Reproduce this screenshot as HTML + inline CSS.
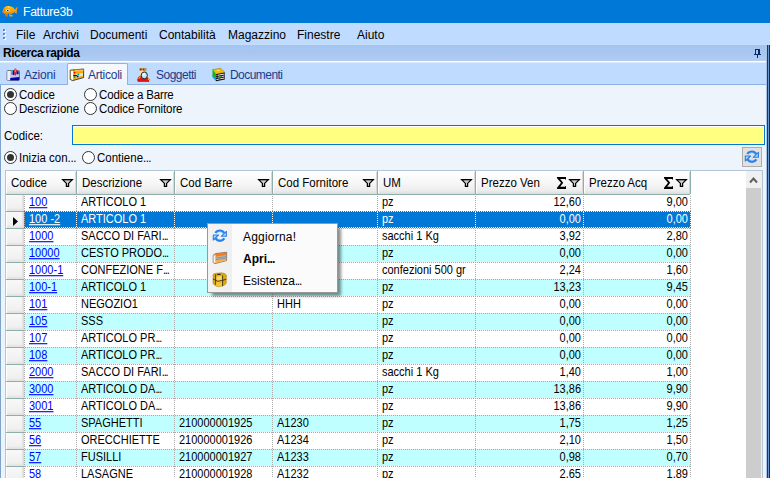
<!DOCTYPE html><html><head><meta charset="utf-8"><style>
*{margin:0;padding:0;box-sizing:border-box}
html,body{width:770px;height:478px;overflow:hidden;background:#EEF4FC;font-family:"Liberation Sans",sans-serif;position:relative}
.a{position:absolute}
.t{position:absolute;white-space:nowrap;line-height:1}
svg{position:absolute;overflow:visible}
</style></head><body><div class="a" style="left:0px;top:0px;width:770px;height:23px;background:#0078D7;"></div>
<svg style="left:0px;top:2px" width="18" height="18" viewBox="0 0 18 18">
<defs><linearGradient id="fg" x1="0" y1="0" x2="0" y2="1"><stop offset="0" stop-color="#FFC400"/><stop offset="1" stop-color="#F09000"/></linearGradient></defs>
<path d="M14.4,8 L17.4,4.6 Q18,5.6 16.9,7.6 L16.8,11.8 L14.2,10.2 Z" fill="#F29A10"/>
<path d="M2.8,9.4 Q3.2,5.2 6.8,4.1 Q11,3.5 13.2,5.6 L15.4,8.2 Q14,11.6 10,12 L5.2,12 Q3.2,11.4 2.8,9.4 Z" fill="url(#fg)"/>
<path d="M2,9 L4.6,8.2 L4.8,10.4 L2.4,10.4 Z" fill="#F08400"/>
<path d="M4.6,11.4 L8.2,11.8 L7.6,14.8 L5.4,14.2 Z" fill="#E07000"/>
<path d="M9,12 L12.8,13.2 L12.6,14.6 L9.4,14.4 Z" fill="#F69A20"/>
<ellipse cx="7.8" cy="8.3" rx="1.7" ry="1.3" fill="#FFFFFF"/>
<circle cx="7.8" cy="8.5" r="0.75" fill="#000"/>
<path d="M5.8,7.4 Q7.5,6.6 9.2,7.2" fill="none" stroke="#A08060" stroke-width="0.4"/>
<path d="M5.6,3 L6.8,4.2" stroke="#B06000" stroke-width="0.8"/>
<circle cx="4.6" cy="7" r="0.5" fill="#C06000"/>
<circle cx="8.6" cy="11.3" r="0.5" fill="#B05800"/>
<ellipse cx="9" cy="5" rx="1" ry="0.5" fill="#FFE890"/>
</svg>
<div class="t" style="left:23px;top:6px;font-size:12.2px;color:#fff;letter-spacing:-0.3px">Fatture3b</div>
<div class="a" style="left:0px;top:23px;width:770px;height:22px;background:#BFDBFF;"></div>
<div class="a" style="left:0px;top:44px;width:770px;height:1px;background:#C4DDFB;"></div>
<div class="t" style="left:16px;top:29px;font-size:12px;color:#000;">File</div>
<div class="t" style="left:43px;top:29px;font-size:12px;color:#000;">Archivi</div>
<div class="t" style="left:90px;top:29px;font-size:12px;color:#000;">Documenti</div>
<div class="t" style="left:159px;top:29px;font-size:12px;color:#000;">Contabilità</div>
<div class="t" style="left:228px;top:29px;font-size:12px;color:#000;">Magazzino</div>
<div class="t" style="left:297px;top:29px;font-size:12px;color:#000;">Finestre</div>
<div class="t" style="left:357px;top:29px;font-size:12px;color:#000;">Aiuto</div>
<div class="a" style="left:3px;top:29px;width:2px;height:2px;background:#6A8FC8;"></div>
<div class="a" style="left:4px;top:30px;width:2px;height:2px;background:#FFFFFF;z-index:0"></div>
<div class="a" style="left:3px;top:29px;width:2px;height:2px;background:#5B8BD6;"></div>
<div class="a" style="left:3px;top:33px;width:2px;height:2px;background:#6A8FC8;"></div>
<div class="a" style="left:4px;top:34px;width:2px;height:2px;background:#FFFFFF;z-index:0"></div>
<div class="a" style="left:3px;top:33px;width:2px;height:2px;background:#5B8BD6;"></div>
<div class="a" style="left:3px;top:37px;width:2px;height:2px;background:#6A8FC8;"></div>
<div class="a" style="left:4px;top:38px;width:2px;height:2px;background:#FFFFFF;z-index:0"></div>
<div class="a" style="left:3px;top:37px;width:2px;height:2px;background:#5B8BD6;"></div>
<div class="a" style="left:0px;top:45px;width:767px;height:16px;background:linear-gradient(#A5C4EF 0%,#A8C7F0 50%,#B2CDEF 100%);"></div>
<div class="t" style="left:3px;top:47px;font-size:12px;color:#000;font-weight:bold;letter-spacing:-0.45px">Ricerca rapida</div>
<svg style="left:754px;top:49px" width="7" height="9" viewBox="0 0 7 9">
<path d="M1.5,0.5 H5.5 V5" fill="none" stroke="#0A2A6E" stroke-width="1"/>
<rect x="1" y="0" width="1" height="5" fill="#0A2A6E"/>
<rect x="4" y="0" width="2" height="5" fill="#0A2A6E"/>
<rect x="0" y="5" width="7" height="1" fill="#0A2A6E"/>
<rect x="3" y="6" width="1" height="3" fill="#0A2A6E"/>
</svg>
<div class="a" style="left:0px;top:61px;width:767px;height:1px;background:#FFFFFF;"></div>
<div class="a" style="left:0px;top:62px;width:767px;height:1px;background:#DCEAFB;"></div>
<div class="a" style="left:0px;top:63px;width:767px;height:22px;background:#BFDBFF;"></div>
<div class="a" style="left:0px;top:84px;width:767px;height:1px;background:#8DB2E3;"></div>
<div class="a" style="left:67px;top:63px;width:61px;height:22px;background:linear-gradient(#F6FAFE,#EEF4FC);border:1px solid #8DB2E3;border-bottom:none;border-radius:2px 2px 0 0"></div>
<div class="t" style="left:24px;top:69px;font-size:12px;color:#1E3A8A;letter-spacing:-0.2px">Azioni</div>
<div class="t" style="left:88px;top:69px;font-size:12px;color:#1E3A8A;letter-spacing:-0.25px">Articoli</div>
<div class="t" style="left:156px;top:69px;font-size:12px;color:#1E3A8A;letter-spacing:-0.5px">Soggetti</div>
<div class="t" style="left:230px;top:69px;font-size:12px;color:#1E3A8A;letter-spacing:-0.55px">Documenti</div>
<svg style="left:4px;top:66px" width="18" height="18" viewBox="0 0 18 18">
<path d="M3,5.5 Q3,4.5 4,4.5 L14.5,4.5 Q15.5,4.5 15.5,5.5 L15.5,13 Q15.5,14.5 14,14.5 L4,14.5 Q3,14.5 3,13.5 Z" fill="#C4C4DC" stroke="#6A6A78" stroke-width="0.9"/>
<rect x="3.4" y="5" width="2.8" height="9.2" fill="#EEEEFF"/>
<path d="M6.2,12 L15.2,11 L15.2,14.2 L6.2,14.2 Z" fill="#0000C0"/>
<rect x="7" y="4" width="2" height="4.5" fill="#20A8E8"/>
<rect x="7" y="5.5" width="2" height="0.8" fill="#F0C000"/>
<rect x="8.8" y="4.5" width="1.6" height="4.5" fill="#0010A0"/>
<path d="M10.2,3.5 Q11,2 12.2,2.8 L12.8,5 L12,8.8 L10.4,8.8 Z" fill="#FF0808"/>
<rect x="10.8" y="3.2" width="0.8" height="3" fill="#FFB0B0"/>
<rect x="10.6" y="8.4" width="1.4" height="1" fill="#A020C0"/>
<rect x="12.6" y="5.2" width="2" height="3" fill="#0000B0"/>
</svg>
<svg style="left:68px;top:66px" width="18" height="18" viewBox="0 0 18 18">
<path d="M2.2,4.2 L15.6,3 L15.6,11.6 L4.6,14.6 L2.2,13.4 Z" fill="#F0B818" stroke="#303030" stroke-width="0.9"/>
<path d="M2.8,4.8 L5,4.8 L5,14 L2.8,13 Z" fill="#FFFFF0"/>
<path d="M5.4,6 L15,5.2 L15,10 L5.4,12.2 Z" fill="#F8A800"/>
<path d="M7.5,7.8 L15,7 L15,9.8 L7.5,11 Z" fill="#D8E4EC"/>
<rect x="5.4" y="9" width="3.4" height="1.2" fill="#000"/>
<rect x="7" y="3.6" width="8.5" height="1.6" fill="#F8C040"/>
<circle cx="6.6" cy="6.6" r="0.9" fill="#F00000"/>
<circle cx="10.4" cy="8.4" r="0.9" fill="#008888"/>
<circle cx="9.6" cy="10.3" r="0.9" fill="#000090"/>
<circle cx="6.6" cy="11.3" r="0.8" fill="#009090"/>
</svg>
<svg style="left:135px;top:66px" width="18" height="18" viewBox="0 0 18 18">
<path d="M2.5,14 Q3,10.5 5.5,10 L11,10.5 Q13.5,12 15,14 L14,15.5 L3,15.5 Z" fill="#E41010" stroke="#703030" stroke-width="0.6"/>
<path d="M3.2,12.5 L5,10.2 L6,11 L4,13 Z" fill="#FFA020"/>
<path d="M4.8,2.6 L11.2,2.6 L11,4.8 L5,4.8 Z" fill="#F0C020" stroke="#706040" stroke-width="0.5"/>
<circle cx="5.8" cy="3.4" r="0.9" fill="#E00000"/><circle cx="8.6" cy="3.4" r="0.9" fill="#E00000"/>
<path d="M5,4.8 L8.5,4.8 L8.5,8 L6,9.5 L5,8 Z" fill="#FFD8A8"/>
<ellipse cx="9.3" cy="9.4" rx="3.1" ry="3.4" fill="#BCE6F8" stroke="#181818" stroke-width="0.9"/>
<ellipse cx="8.8" cy="8.6" rx="1.5" ry="1.6" fill="#E8F8FF"/>
<circle cx="13.6" cy="13.2" r="0.8" fill="#FFE000"/><circle cx="14.6" cy="14.4" r="0.7" fill="#FFE000"/>
</svg>
<svg style="left:210px;top:66px" width="18" height="18" viewBox="0 0 18 18">
<path d="M2.5,3.6 L10.6,2.2 L14.8,6.4 L6,8.2 Z" fill="#F2C000" stroke="#705800" stroke-width="0.4"/>
<ellipse cx="8" cy="4.5" rx="1.2" ry="0.5" fill="#FFF0A0"/>
<path d="M2.5,3.6 L6,8.2 L6,15 L2.5,10.8 Z" fill="#10B810"/>
<path d="M2.5,8.6 L6,12.4 L6,15 L2.5,10.8 Z" fill="#1898F0"/>
<path d="M6,8.2 L14.8,6.4 L14.8,13.4 L6,15.2 Z" fill="#080808"/>
<path d="M6.4,9.6 L14.4,8" stroke="#F4F4F4" stroke-width="1"/>
<path d="M6.4,11.6 L14.4,10" stroke="#F0D8F0" stroke-width="1"/>
<path d="M6.4,13.6 L14.4,12" stroke="#F8F0D8" stroke-width="1"/>
<rect x="6.6" y="8.8" width="1.4" height="1" fill="#D01010"/>
<rect x="9.8" y="10.2" width="2" height="1" fill="#10A010"/>
<rect x="7" y="11" width="1.2" height="1" fill="#9010C0"/>
<rect x="8.6" y="12.6" width="2" height="1" fill="#1020C0"/>
</svg>
<div class="a" style="left:0px;top:85px;width:1px;height:393px;background:#7DA2CE;"></div>
<div class="a" style="left:766px;top:45px;width:1px;height:433px;background:#A8C2E8;"></div>
<div class="a" style="left:767px;top:45px;width:1px;height:433px;background:#123A70;"></div>
<div class="a" style="left:768px;top:45px;width:1px;height:433px;background:#6A93D0;"></div>
<div class="a" style="left:769px;top:45px;width:1px;height:433px;background:#0C2D5C;"></div>
<div class="a" style="left:4px;top:88px;width:13px;height:13px;border-radius:50%;border:1.2px solid #333;background:#fff"></div>
<div class="a" style="left:7px;top:91px;width:7px;height:7px;border-radius:50%;background:#333"></div>
<div class="t" style="left:19px;top:89px;font-size:11.5px;color:#000;transform:scaleY(1.1);transform-origin:0 0;">Codice</div>
<div class="a" style="left:4px;top:102px;width:13px;height:13px;border-radius:50%;border:1.2px solid #333;background:#fff"></div>
<div class="t" style="left:19px;top:103px;font-size:11.5px;color:#000;transform:scaleY(1.1);transform-origin:0 0;">Descrizione</div>
<div class="a" style="left:84px;top:88px;width:13px;height:13px;border-radius:50%;border:1.2px solid #333;background:#fff"></div>
<div class="t" style="left:99px;top:89px;font-size:11.5px;color:#000;transform:scaleY(1.1);transform-origin:0 0;letter-spacing:-0.15px;">Codice a Barre</div>
<div class="a" style="left:84px;top:102px;width:13px;height:13px;border-radius:50%;border:1.2px solid #333;background:#fff"></div>
<div class="t" style="left:99px;top:103px;font-size:11.5px;color:#000;transform:scaleY(1.1);transform-origin:0 0;letter-spacing:-0.1px;">Codice Fornitore</div>
<div class="t" style="left:4px;top:130px;font-size:11.5px;color:#000;transform:scaleY(1.1);transform-origin:0 0;">Codice:</div>
<div class="a" style="left:72px;top:125px;width:693px;height:20px;background:#FFFF80;border:1px solid #0078D7;box-shadow:inset 0 0 0 1px #FFFFFF"></div>
<div class="a" style="left:4px;top:151px;width:13px;height:13px;border-radius:50%;border:1.2px solid #333;background:#fff"></div>
<div class="a" style="left:7px;top:154px;width:7px;height:7px;border-radius:50%;background:#333"></div>
<div class="t" style="left:19px;top:152px;font-size:11.5px;color:#000;transform:scaleY(1.1);transform-origin:0 0;">Inizia con<span style="letter-spacing:-0.4px">...</span></div>
<div class="a" style="left:82px;top:151px;width:13px;height:13px;border-radius:50%;border:1.2px solid #333;background:#fff"></div>
<div class="t" style="left:97px;top:152px;font-size:11.5px;color:#000;transform:scaleY(1.1);transform-origin:0 0;">Contiene<span style="letter-spacing:-0.6px">...</span></div>
<div class="a" style="left:742px;top:147px;width:20px;height:20px;background:#E1E1E1;border:1px solid #ADADAD"></div>
<svg style="left:743px;top:148px" width="18" height="18" viewBox="0 0 18 18"><g>
<path d="M4.3,5.9 A5.3,5.3 0 0 1 13.2,6.2" fill="none" stroke="#2A7FE8" stroke-width="2.4"/>
<path d="M5.6,6.2 A4.4,4.4 0 0 1 11.8,6.0" fill="none" stroke="#9ED0FF" stroke-width="0.6"/>
<path d="M10.2,9.3 L15.4,9.3 L15.4,4.3 Z" fill="#A8D8FF" stroke="#2A7FE8" stroke-width="1.1" stroke-linejoin="round"/>
</g><g transform="rotate(180 8.85 8.65)">
<path d="M4.3,5.9 A5.3,5.3 0 0 1 13.2,6.2" fill="none" stroke="#2A7FE8" stroke-width="2.4"/>
<path d="M5.6,6.2 A4.4,4.4 0 0 1 11.8,6.0" fill="none" stroke="#9ED0FF" stroke-width="0.6"/>
<path d="M10.2,9.3 L15.4,9.3 L15.4,4.3 Z" fill="#A8D8FF" stroke="#2A7FE8" stroke-width="1.1" stroke-linejoin="round"/>
</g></svg>
<div class="a" style="left:5px;top:170px;width:758px;height:308px;background:#FFFFFF;border:1px solid #B4C6D6;border-bottom:none"></div>
<div class="a" style="left:6px;top:171px;width:71px;height:23px;background:linear-gradient(#FFFFFF 0%,#F7F7F7 50%,#EDEDED 85%,#DCDCDC 100%);border-right:1px solid #8FAFAA"></div>
<div class="a" style="left:6px;top:171px;width:1px;height:22px;background:#FFFFFF;"></div>
<div class="a" style="left:75px;top:172px;width:1px;height:22px;background:#D8D8D8;"></div>
<div class="t" style="left:11px;top:177px;font-size:11.5px;color:#000;transform:scaleY(1.1);transform-origin:0 0;">Codice</div>
<svg style="left:62px;top:179px" width="11" height="8" viewBox="0 0 11 8"><path d="M0.7,0.7 H10.3 L6.6,4.4 V7.3 H4.4 V4.4 Z" fill="#D0D0D0" stroke="#000" stroke-width="1.25" stroke-linejoin="miter"/><rect x="0" y="0" width="11" height="1.1" fill="#000"/></svg>
<div class="a" style="left:77px;top:171px;width:98px;height:23px;background:linear-gradient(#FFFFFF 0%,#F7F7F7 50%,#EDEDED 85%,#DCDCDC 100%);border-right:1px solid #8FAFAA"></div>
<div class="a" style="left:77px;top:171px;width:1px;height:22px;background:#FFFFFF;"></div>
<div class="a" style="left:173px;top:172px;width:1px;height:22px;background:#D8D8D8;"></div>
<div class="t" style="left:82px;top:177px;font-size:11.5px;color:#000;transform:scaleY(1.1);transform-origin:0 0;">Descrizione</div>
<svg style="left:160px;top:179px" width="11" height="8" viewBox="0 0 11 8"><path d="M0.7,0.7 H10.3 L6.6,4.4 V7.3 H4.4 V4.4 Z" fill="#D0D0D0" stroke="#000" stroke-width="1.25" stroke-linejoin="miter"/><rect x="0" y="0" width="11" height="1.1" fill="#000"/></svg>
<div class="a" style="left:175px;top:171px;width:98px;height:23px;background:linear-gradient(#FFFFFF 0%,#F7F7F7 50%,#EDEDED 85%,#DCDCDC 100%);border-right:1px solid #8FAFAA"></div>
<div class="a" style="left:175px;top:171px;width:1px;height:22px;background:#FFFFFF;"></div>
<div class="a" style="left:271px;top:172px;width:1px;height:22px;background:#D8D8D8;"></div>
<div class="t" style="left:180px;top:177px;font-size:11.5px;color:#000;transform:scaleY(1.1);transform-origin:0 0;">Cod Barre</div>
<svg style="left:258px;top:179px" width="11" height="8" viewBox="0 0 11 8"><path d="M0.7,0.7 H10.3 L6.6,4.4 V7.3 H4.4 V4.4 Z" fill="#D0D0D0" stroke="#000" stroke-width="1.25" stroke-linejoin="miter"/><rect x="0" y="0" width="11" height="1.1" fill="#000"/></svg>
<div class="a" style="left:273px;top:171px;width:105px;height:23px;background:linear-gradient(#FFFFFF 0%,#F7F7F7 50%,#EDEDED 85%,#DCDCDC 100%);border-right:1px solid #8FAFAA"></div>
<div class="a" style="left:273px;top:171px;width:1px;height:22px;background:#FFFFFF;"></div>
<div class="a" style="left:376px;top:172px;width:1px;height:22px;background:#D8D8D8;"></div>
<div class="t" style="left:278px;top:177px;font-size:11.5px;color:#000;transform:scaleY(1.1);transform-origin:0 0;">Cod Fornitore</div>
<svg style="left:363px;top:179px" width="11" height="8" viewBox="0 0 11 8"><path d="M0.7,0.7 H10.3 L6.6,4.4 V7.3 H4.4 V4.4 Z" fill="#D0D0D0" stroke="#000" stroke-width="1.25" stroke-linejoin="miter"/><rect x="0" y="0" width="11" height="1.1" fill="#000"/></svg>
<div class="a" style="left:378px;top:171px;width:98px;height:23px;background:linear-gradient(#FFFFFF 0%,#F7F7F7 50%,#EDEDED 85%,#DCDCDC 100%);border-right:1px solid #8FAFAA"></div>
<div class="a" style="left:378px;top:171px;width:1px;height:22px;background:#FFFFFF;"></div>
<div class="a" style="left:474px;top:172px;width:1px;height:22px;background:#D8D8D8;"></div>
<div class="t" style="left:383px;top:177px;font-size:11.5px;color:#000;transform:scaleY(1.1);transform-origin:0 0;">UM</div>
<svg style="left:461px;top:179px" width="11" height="8" viewBox="0 0 11 8"><path d="M0.7,0.7 H10.3 L6.6,4.4 V7.3 H4.4 V4.4 Z" fill="#D0D0D0" stroke="#000" stroke-width="1.25" stroke-linejoin="miter"/><rect x="0" y="0" width="11" height="1.1" fill="#000"/></svg>
<div class="a" style="left:476px;top:171px;width:108px;height:23px;background:linear-gradient(#FFFFFF 0%,#F7F7F7 50%,#EDEDED 85%,#DCDCDC 100%);border-right:1px solid #8FAFAA"></div>
<div class="a" style="left:476px;top:171px;width:1px;height:22px;background:#FFFFFF;"></div>
<div class="a" style="left:582px;top:172px;width:1px;height:22px;background:#D8D8D8;"></div>
<div class="t" style="left:481px;top:177px;font-size:11.5px;color:#000;transform:scaleY(1.1);transform-origin:0 0;">Prezzo Ven</div>
<svg style="left:569px;top:179px" width="11" height="8" viewBox="0 0 11 8"><path d="M0.7,0.7 H10.3 L6.6,4.4 V7.3 H4.4 V4.4 Z" fill="#D0D0D0" stroke="#000" stroke-width="1.25" stroke-linejoin="miter"/><rect x="0" y="0" width="11" height="1.1" fill="#000"/></svg>
<svg style="left:557px;top:177px" width="9" height="12" viewBox="0 0 9 12"><path d="M0,0 H9 V2.5 H8 V2 H3.2 L6.2,5.8 L3.2,9.8 H8 V9.3 H9 V12 H0 V10.8 L4,5.8 L0,1.2 Z" fill="#000"/></svg>
<div class="a" style="left:584px;top:171px;width:107px;height:23px;background:linear-gradient(#FFFFFF 0%,#F7F7F7 50%,#EDEDED 85%,#DCDCDC 100%);border-right:1px solid #8FAFAA"></div>
<div class="a" style="left:584px;top:171px;width:1px;height:22px;background:#FFFFFF;"></div>
<div class="a" style="left:689px;top:172px;width:1px;height:22px;background:#D8D8D8;"></div>
<div class="t" style="left:589px;top:177px;font-size:11.5px;color:#000;transform:scaleY(1.1);transform-origin:0 0;">Prezzo Acq</div>
<svg style="left:676px;top:179px" width="11" height="8" viewBox="0 0 11 8"><path d="M0.7,0.7 H10.3 L6.6,4.4 V7.3 H4.4 V4.4 Z" fill="#D0D0D0" stroke="#000" stroke-width="1.25" stroke-linejoin="miter"/><rect x="0" y="0" width="11" height="1.1" fill="#000"/></svg>
<svg style="left:664px;top:177px" width="9" height="12" viewBox="0 0 9 12"><path d="M0,0 H9 V2.5 H8 V2 H3.2 L6.2,5.8 L3.2,9.8 H8 V9.3 H9 V12 H0 V10.8 L4,5.8 L0,1.2 Z" fill="#000"/></svg>
<div class="a" style="left:6px;top:194px;width:684px;height:1px;background:#8FAFAA;"></div>
<div class="a" style="left:6px;top:195px;width:18px;height:16px;background:linear-gradient(#F8F8F8,#F0F0F0 80%,#E0E0E0);"></div>
<div class="a" style="left:6px;top:195px;width:1px;height:16px;background:#FFFFFF;"></div>
<div class="a" style="left:22px;top:195px;width:2px;height:16px;background:linear-gradient(90deg,#E6E6E6,#D8D8D8);"></div>
<div class="a" style="left:6px;top:211px;width:18px;height:1px;background:#8FAFAA;"></div>
<div class="a" style="left:24px;top:195px;width:667px;height:16px;background:#FFFFFF;"></div>
<div class="a" style="left:24px;top:195px;width:1px;height:16px;background:repeating-linear-gradient(180deg,transparent 0 1px,#A8A8A8 1px 2px);"></div>
<div class="a" style="left:76px;top:195px;width:1px;height:16px;background:repeating-linear-gradient(180deg,transparent 0 1px,#A8A8A8 1px 2px);"></div>
<div class="a" style="left:174px;top:195px;width:1px;height:16px;background:repeating-linear-gradient(180deg,transparent 0 1px,#A8A8A8 1px 2px);"></div>
<div class="a" style="left:272px;top:195px;width:1px;height:16px;background:repeating-linear-gradient(180deg,transparent 0 1px,#A8A8A8 1px 2px);"></div>
<div class="a" style="left:377px;top:195px;width:1px;height:16px;background:repeating-linear-gradient(180deg,transparent 0 1px,#A8A8A8 1px 2px);"></div>
<div class="a" style="left:475px;top:195px;width:1px;height:16px;background:repeating-linear-gradient(180deg,transparent 0 1px,#A8A8A8 1px 2px);"></div>
<div class="a" style="left:583px;top:195px;width:1px;height:16px;background:repeating-linear-gradient(180deg,transparent 0 1px,#A8A8A8 1px 2px);"></div>
<div class="a" style="left:690px;top:195px;width:1px;height:16px;background:repeating-linear-gradient(180deg,transparent 0 1px,#A8A8A8 1px 2px);"></div>
<div class="t" style="left:29px;top:197px;font-size:11px;color:#0000FF;text-decoration:underline;transform:scaleY(1.12);transform-origin:0 80%;">100</div>
<div class="t" style="left:81px;top:197px;font-size:11px;color:#000;transform:scaleY(1.12);transform-origin:0 80%;">ARTICOLO 1</div>
<div class="t" style="left:382px;top:197px;font-size:11px;color:#000;transform:scaleY(1.12);transform-origin:0 80%;">pz</div>
<div class="t" style="right:189px;top:197px;font-size:11px;color:#000;transform:scaleY(1.12);transform-origin:0 80%;">12,60</div>
<div class="t" style="right:82px;top:197px;font-size:11px;color:#000;transform:scaleY(1.12);transform-origin:0 80%;">9,00</div>
<div class="a" style="left:6px;top:212px;width:18px;height:16px;background:linear-gradient(#F8F8F8,#F0F0F0 80%,#E0E0E0);"></div>
<div class="a" style="left:6px;top:212px;width:1px;height:16px;background:#FFFFFF;"></div>
<div class="a" style="left:22px;top:212px;width:2px;height:16px;background:linear-gradient(90deg,#E6E6E6,#D8D8D8);"></div>
<div class="a" style="left:6px;top:228px;width:18px;height:1px;background:#8FAFAA;"></div>
<div class="a" style="left:24px;top:211px;width:667px;height:17px;background:#0078D7;"></div>
<div class="a" style="left:24px;top:211px;width:1px;height:17px;background:repeating-linear-gradient(180deg,transparent 0 1px,#A8A8A8 1px 2px);"></div>
<div class="a" style="left:76px;top:211px;width:1px;height:17px;background:repeating-linear-gradient(180deg,transparent 0 1px,#FFFFFF 1px 2px);"></div>
<div class="a" style="left:174px;top:211px;width:1px;height:17px;background:repeating-linear-gradient(180deg,transparent 0 1px,#FFFFFF 1px 2px);"></div>
<div class="a" style="left:272px;top:211px;width:1px;height:17px;background:repeating-linear-gradient(180deg,transparent 0 1px,#FFFFFF 1px 2px);"></div>
<div class="a" style="left:377px;top:211px;width:1px;height:17px;background:repeating-linear-gradient(180deg,transparent 0 1px,#FFFFFF 1px 2px);"></div>
<div class="a" style="left:475px;top:211px;width:1px;height:17px;background:repeating-linear-gradient(180deg,transparent 0 1px,#FFFFFF 1px 2px);"></div>
<div class="a" style="left:583px;top:211px;width:1px;height:17px;background:repeating-linear-gradient(180deg,transparent 0 1px,#FFFFFF 1px 2px);"></div>
<div class="a" style="left:690px;top:211px;width:1px;height:17px;background:repeating-linear-gradient(180deg,transparent 0 1px,#FFFFFF 1px 2px);"></div>
<div class="t" style="left:29px;top:214px;font-size:11px;color:#fff;text-decoration:underline;transform:scaleY(1.12);transform-origin:0 80%;">100 -2</div>
<div class="t" style="left:81px;top:214px;font-size:11px;color:#FFFFFF;transform:scaleY(1.12);transform-origin:0 80%;">ARTICOLO 1</div>
<div class="t" style="left:382px;top:214px;font-size:11px;color:#FFFFFF;transform:scaleY(1.12);transform-origin:0 80%;">pz</div>
<div class="t" style="right:189px;top:214px;font-size:11px;color:#FFFFFF;transform:scaleY(1.12);transform-origin:0 80%;">0,00</div>
<div class="t" style="right:82px;top:214px;font-size:11px;color:#FFFFFF;transform:scaleY(1.12);transform-origin:0 80%;">0,00</div>
<div class="a" style="left:24px;top:211px;width:667px;height:1px;background:repeating-linear-gradient(90deg,#0078D7 0 1px,#F4ECDC 1px 2px);"></div>
<div class="a" style="left:24px;top:227px;width:667px;height:1px;background:repeating-linear-gradient(90deg,#0078D7 0 1px,#F4ECDC 1px 2px);"></div>
<svg style="left:13px;top:217px" width="5" height="9" viewBox="0 0 5 9"><path d="M0,0 L5,4.5 L0,9 Z" fill="#000"/></svg>
<div class="a" style="left:6px;top:229px;width:18px;height:16px;background:linear-gradient(#F8F8F8,#F0F0F0 80%,#E0E0E0);"></div>
<div class="a" style="left:6px;top:229px;width:1px;height:16px;background:#FFFFFF;"></div>
<div class="a" style="left:22px;top:229px;width:2px;height:16px;background:linear-gradient(90deg,#E6E6E6,#D8D8D8);"></div>
<div class="a" style="left:6px;top:245px;width:18px;height:1px;background:#8FAFAA;"></div>
<div class="a" style="left:24px;top:228px;width:667px;height:17px;background:#FFFFFF;"></div>
<div class="a" style="left:24px;top:228px;width:667px;height:1px;background:repeating-linear-gradient(90deg,transparent 0 1px,#A8A8A8 1px 2px);"></div>
<div class="a" style="left:24px;top:228px;width:1px;height:17px;background:repeating-linear-gradient(180deg,#A8A8A8 0 1px,transparent 1px 2px);"></div>
<div class="a" style="left:76px;top:228px;width:1px;height:17px;background:repeating-linear-gradient(180deg,#A8A8A8 0 1px,transparent 1px 2px);"></div>
<div class="a" style="left:174px;top:228px;width:1px;height:17px;background:repeating-linear-gradient(180deg,#A8A8A8 0 1px,transparent 1px 2px);"></div>
<div class="a" style="left:272px;top:228px;width:1px;height:17px;background:repeating-linear-gradient(180deg,#A8A8A8 0 1px,transparent 1px 2px);"></div>
<div class="a" style="left:377px;top:228px;width:1px;height:17px;background:repeating-linear-gradient(180deg,#A8A8A8 0 1px,transparent 1px 2px);"></div>
<div class="a" style="left:475px;top:228px;width:1px;height:17px;background:repeating-linear-gradient(180deg,#A8A8A8 0 1px,transparent 1px 2px);"></div>
<div class="a" style="left:583px;top:228px;width:1px;height:17px;background:repeating-linear-gradient(180deg,#A8A8A8 0 1px,transparent 1px 2px);"></div>
<div class="a" style="left:690px;top:228px;width:1px;height:17px;background:repeating-linear-gradient(180deg,#A8A8A8 0 1px,transparent 1px 2px);"></div>
<div class="t" style="left:29px;top:231px;font-size:11px;color:#0000FF;text-decoration:underline;transform:scaleY(1.12);transform-origin:0 80%;">1000</div>
<div class="t" style="left:81px;top:231px;font-size:11px;color:#000;transform:scaleY(1.12);transform-origin:0 80%;">SACCO DI FARI<span style="letter-spacing:-1.1px">...</span></div>
<div class="t" style="left:382px;top:231px;font-size:11px;color:#000;transform:scaleY(1.12);transform-origin:0 80%;">sacchi 1 Kg</div>
<div class="t" style="right:189px;top:231px;font-size:11px;color:#000;transform:scaleY(1.12);transform-origin:0 80%;">3,92</div>
<div class="t" style="right:82px;top:231px;font-size:11px;color:#000;transform:scaleY(1.12);transform-origin:0 80%;">2,80</div>
<div class="a" style="left:6px;top:246px;width:18px;height:16px;background:linear-gradient(#F8F8F8,#F0F0F0 80%,#E0E0E0);"></div>
<div class="a" style="left:6px;top:246px;width:1px;height:16px;background:#FFFFFF;"></div>
<div class="a" style="left:22px;top:246px;width:2px;height:16px;background:linear-gradient(90deg,#E6E6E6,#D8D8D8);"></div>
<div class="a" style="left:6px;top:262px;width:18px;height:1px;background:#8FAFAA;"></div>
<div class="a" style="left:24px;top:245px;width:667px;height:17px;background:#C0FFFF;"></div>
<div class="a" style="left:24px;top:245px;width:667px;height:1px;background:repeating-linear-gradient(90deg,transparent 0 1px,#A8A8A8 1px 2px);"></div>
<div class="a" style="left:24px;top:245px;width:1px;height:17px;background:repeating-linear-gradient(180deg,transparent 0 1px,#A8A8A8 1px 2px);"></div>
<div class="a" style="left:76px;top:245px;width:1px;height:17px;background:repeating-linear-gradient(180deg,transparent 0 1px,#A8A8A8 1px 2px);"></div>
<div class="a" style="left:174px;top:245px;width:1px;height:17px;background:repeating-linear-gradient(180deg,transparent 0 1px,#A8A8A8 1px 2px);"></div>
<div class="a" style="left:272px;top:245px;width:1px;height:17px;background:repeating-linear-gradient(180deg,transparent 0 1px,#A8A8A8 1px 2px);"></div>
<div class="a" style="left:377px;top:245px;width:1px;height:17px;background:repeating-linear-gradient(180deg,transparent 0 1px,#A8A8A8 1px 2px);"></div>
<div class="a" style="left:475px;top:245px;width:1px;height:17px;background:repeating-linear-gradient(180deg,transparent 0 1px,#A8A8A8 1px 2px);"></div>
<div class="a" style="left:583px;top:245px;width:1px;height:17px;background:repeating-linear-gradient(180deg,transparent 0 1px,#A8A8A8 1px 2px);"></div>
<div class="a" style="left:690px;top:245px;width:1px;height:17px;background:repeating-linear-gradient(180deg,transparent 0 1px,#A8A8A8 1px 2px);"></div>
<div class="t" style="left:29px;top:248px;font-size:11px;color:#0000FF;text-decoration:underline;transform:scaleY(1.12);transform-origin:0 80%;">10000</div>
<div class="t" style="left:81px;top:248px;font-size:11px;color:#000;transform:scaleY(1.12);transform-origin:0 80%;">CESTO PRODO<span style="letter-spacing:-1.1px">...</span></div>
<div class="t" style="left:382px;top:248px;font-size:11px;color:#000;transform:scaleY(1.12);transform-origin:0 80%;">pz</div>
<div class="t" style="right:189px;top:248px;font-size:11px;color:#000;transform:scaleY(1.12);transform-origin:0 80%;">0,00</div>
<div class="t" style="right:82px;top:248px;font-size:11px;color:#000;transform:scaleY(1.12);transform-origin:0 80%;">0,00</div>
<div class="a" style="left:6px;top:263px;width:18px;height:16px;background:linear-gradient(#F8F8F8,#F0F0F0 80%,#E0E0E0);"></div>
<div class="a" style="left:6px;top:263px;width:1px;height:16px;background:#FFFFFF;"></div>
<div class="a" style="left:22px;top:263px;width:2px;height:16px;background:linear-gradient(90deg,#E6E6E6,#D8D8D8);"></div>
<div class="a" style="left:6px;top:279px;width:18px;height:1px;background:#8FAFAA;"></div>
<div class="a" style="left:24px;top:262px;width:667px;height:17px;background:#FFFFFF;"></div>
<div class="a" style="left:24px;top:262px;width:667px;height:1px;background:repeating-linear-gradient(90deg,transparent 0 1px,#A8A8A8 1px 2px);"></div>
<div class="a" style="left:24px;top:262px;width:1px;height:17px;background:repeating-linear-gradient(180deg,#A8A8A8 0 1px,transparent 1px 2px);"></div>
<div class="a" style="left:76px;top:262px;width:1px;height:17px;background:repeating-linear-gradient(180deg,#A8A8A8 0 1px,transparent 1px 2px);"></div>
<div class="a" style="left:174px;top:262px;width:1px;height:17px;background:repeating-linear-gradient(180deg,#A8A8A8 0 1px,transparent 1px 2px);"></div>
<div class="a" style="left:272px;top:262px;width:1px;height:17px;background:repeating-linear-gradient(180deg,#A8A8A8 0 1px,transparent 1px 2px);"></div>
<div class="a" style="left:377px;top:262px;width:1px;height:17px;background:repeating-linear-gradient(180deg,#A8A8A8 0 1px,transparent 1px 2px);"></div>
<div class="a" style="left:475px;top:262px;width:1px;height:17px;background:repeating-linear-gradient(180deg,#A8A8A8 0 1px,transparent 1px 2px);"></div>
<div class="a" style="left:583px;top:262px;width:1px;height:17px;background:repeating-linear-gradient(180deg,#A8A8A8 0 1px,transparent 1px 2px);"></div>
<div class="a" style="left:690px;top:262px;width:1px;height:17px;background:repeating-linear-gradient(180deg,#A8A8A8 0 1px,transparent 1px 2px);"></div>
<div class="t" style="left:29px;top:265px;font-size:11px;color:#0000FF;text-decoration:underline;transform:scaleY(1.12);transform-origin:0 80%;">1000-1</div>
<div class="t" style="left:81px;top:265px;font-size:11px;color:#000;transform:scaleY(1.12);transform-origin:0 80%;">CONFEZIONE F<span style="letter-spacing:-1.1px">...</span></div>
<div class="t" style="left:382px;top:265px;font-size:11px;color:#000;transform:scaleY(1.12);transform-origin:0 80%;">confezioni 500 gr</div>
<div class="t" style="right:189px;top:265px;font-size:11px;color:#000;transform:scaleY(1.12);transform-origin:0 80%;">2,24</div>
<div class="t" style="right:82px;top:265px;font-size:11px;color:#000;transform:scaleY(1.12);transform-origin:0 80%;">1,60</div>
<div class="a" style="left:6px;top:280px;width:18px;height:16px;background:linear-gradient(#F8F8F8,#F0F0F0 80%,#E0E0E0);"></div>
<div class="a" style="left:6px;top:280px;width:1px;height:16px;background:#FFFFFF;"></div>
<div class="a" style="left:22px;top:280px;width:2px;height:16px;background:linear-gradient(90deg,#E6E6E6,#D8D8D8);"></div>
<div class="a" style="left:6px;top:296px;width:18px;height:1px;background:#8FAFAA;"></div>
<div class="a" style="left:24px;top:279px;width:667px;height:17px;background:#C0FFFF;"></div>
<div class="a" style="left:24px;top:279px;width:667px;height:1px;background:repeating-linear-gradient(90deg,transparent 0 1px,#A8A8A8 1px 2px);"></div>
<div class="a" style="left:24px;top:279px;width:1px;height:17px;background:repeating-linear-gradient(180deg,transparent 0 1px,#A8A8A8 1px 2px);"></div>
<div class="a" style="left:76px;top:279px;width:1px;height:17px;background:repeating-linear-gradient(180deg,transparent 0 1px,#A8A8A8 1px 2px);"></div>
<div class="a" style="left:174px;top:279px;width:1px;height:17px;background:repeating-linear-gradient(180deg,transparent 0 1px,#A8A8A8 1px 2px);"></div>
<div class="a" style="left:272px;top:279px;width:1px;height:17px;background:repeating-linear-gradient(180deg,transparent 0 1px,#A8A8A8 1px 2px);"></div>
<div class="a" style="left:377px;top:279px;width:1px;height:17px;background:repeating-linear-gradient(180deg,transparent 0 1px,#A8A8A8 1px 2px);"></div>
<div class="a" style="left:475px;top:279px;width:1px;height:17px;background:repeating-linear-gradient(180deg,transparent 0 1px,#A8A8A8 1px 2px);"></div>
<div class="a" style="left:583px;top:279px;width:1px;height:17px;background:repeating-linear-gradient(180deg,transparent 0 1px,#A8A8A8 1px 2px);"></div>
<div class="a" style="left:690px;top:279px;width:1px;height:17px;background:repeating-linear-gradient(180deg,transparent 0 1px,#A8A8A8 1px 2px);"></div>
<div class="t" style="left:29px;top:282px;font-size:11px;color:#0000FF;text-decoration:underline;transform:scaleY(1.12);transform-origin:0 80%;">100-1</div>
<div class="t" style="left:81px;top:282px;font-size:11px;color:#000;transform:scaleY(1.12);transform-origin:0 80%;">ARTICOLO 1</div>
<div class="t" style="left:382px;top:282px;font-size:11px;color:#000;transform:scaleY(1.12);transform-origin:0 80%;">pz</div>
<div class="t" style="right:189px;top:282px;font-size:11px;color:#000;transform:scaleY(1.12);transform-origin:0 80%;">13,23</div>
<div class="t" style="right:82px;top:282px;font-size:11px;color:#000;transform:scaleY(1.12);transform-origin:0 80%;">9,45</div>
<div class="a" style="left:6px;top:297px;width:18px;height:16px;background:linear-gradient(#F8F8F8,#F0F0F0 80%,#E0E0E0);"></div>
<div class="a" style="left:6px;top:297px;width:1px;height:16px;background:#FFFFFF;"></div>
<div class="a" style="left:22px;top:297px;width:2px;height:16px;background:linear-gradient(90deg,#E6E6E6,#D8D8D8);"></div>
<div class="a" style="left:6px;top:313px;width:18px;height:1px;background:#8FAFAA;"></div>
<div class="a" style="left:24px;top:296px;width:667px;height:17px;background:#FFFFFF;"></div>
<div class="a" style="left:24px;top:296px;width:667px;height:1px;background:repeating-linear-gradient(90deg,transparent 0 1px,#A8A8A8 1px 2px);"></div>
<div class="a" style="left:24px;top:296px;width:1px;height:17px;background:repeating-linear-gradient(180deg,#A8A8A8 0 1px,transparent 1px 2px);"></div>
<div class="a" style="left:76px;top:296px;width:1px;height:17px;background:repeating-linear-gradient(180deg,#A8A8A8 0 1px,transparent 1px 2px);"></div>
<div class="a" style="left:174px;top:296px;width:1px;height:17px;background:repeating-linear-gradient(180deg,#A8A8A8 0 1px,transparent 1px 2px);"></div>
<div class="a" style="left:272px;top:296px;width:1px;height:17px;background:repeating-linear-gradient(180deg,#A8A8A8 0 1px,transparent 1px 2px);"></div>
<div class="a" style="left:377px;top:296px;width:1px;height:17px;background:repeating-linear-gradient(180deg,#A8A8A8 0 1px,transparent 1px 2px);"></div>
<div class="a" style="left:475px;top:296px;width:1px;height:17px;background:repeating-linear-gradient(180deg,#A8A8A8 0 1px,transparent 1px 2px);"></div>
<div class="a" style="left:583px;top:296px;width:1px;height:17px;background:repeating-linear-gradient(180deg,#A8A8A8 0 1px,transparent 1px 2px);"></div>
<div class="a" style="left:690px;top:296px;width:1px;height:17px;background:repeating-linear-gradient(180deg,#A8A8A8 0 1px,transparent 1px 2px);"></div>
<div class="t" style="left:29px;top:299px;font-size:11px;color:#0000FF;text-decoration:underline;transform:scaleY(1.12);transform-origin:0 80%;">101</div>
<div class="t" style="left:81px;top:299px;font-size:11px;color:#000;transform:scaleY(1.12);transform-origin:0 80%;">NEGOZIO1</div>
<div class="t" style="left:277px;top:299px;font-size:11px;color:#000;transform:scaleY(1.12);transform-origin:0 80%;">HHH</div>
<div class="t" style="left:382px;top:299px;font-size:11px;color:#000;transform:scaleY(1.12);transform-origin:0 80%;">pz</div>
<div class="t" style="right:189px;top:299px;font-size:11px;color:#000;transform:scaleY(1.12);transform-origin:0 80%;">0,00</div>
<div class="t" style="right:82px;top:299px;font-size:11px;color:#000;transform:scaleY(1.12);transform-origin:0 80%;">0,00</div>
<div class="a" style="left:6px;top:314px;width:18px;height:16px;background:linear-gradient(#F8F8F8,#F0F0F0 80%,#E0E0E0);"></div>
<div class="a" style="left:6px;top:314px;width:1px;height:16px;background:#FFFFFF;"></div>
<div class="a" style="left:22px;top:314px;width:2px;height:16px;background:linear-gradient(90deg,#E6E6E6,#D8D8D8);"></div>
<div class="a" style="left:6px;top:330px;width:18px;height:1px;background:#8FAFAA;"></div>
<div class="a" style="left:24px;top:313px;width:667px;height:17px;background:#C0FFFF;"></div>
<div class="a" style="left:24px;top:313px;width:667px;height:1px;background:repeating-linear-gradient(90deg,transparent 0 1px,#A8A8A8 1px 2px);"></div>
<div class="a" style="left:24px;top:313px;width:1px;height:17px;background:repeating-linear-gradient(180deg,transparent 0 1px,#A8A8A8 1px 2px);"></div>
<div class="a" style="left:76px;top:313px;width:1px;height:17px;background:repeating-linear-gradient(180deg,transparent 0 1px,#A8A8A8 1px 2px);"></div>
<div class="a" style="left:174px;top:313px;width:1px;height:17px;background:repeating-linear-gradient(180deg,transparent 0 1px,#A8A8A8 1px 2px);"></div>
<div class="a" style="left:272px;top:313px;width:1px;height:17px;background:repeating-linear-gradient(180deg,transparent 0 1px,#A8A8A8 1px 2px);"></div>
<div class="a" style="left:377px;top:313px;width:1px;height:17px;background:repeating-linear-gradient(180deg,transparent 0 1px,#A8A8A8 1px 2px);"></div>
<div class="a" style="left:475px;top:313px;width:1px;height:17px;background:repeating-linear-gradient(180deg,transparent 0 1px,#A8A8A8 1px 2px);"></div>
<div class="a" style="left:583px;top:313px;width:1px;height:17px;background:repeating-linear-gradient(180deg,transparent 0 1px,#A8A8A8 1px 2px);"></div>
<div class="a" style="left:690px;top:313px;width:1px;height:17px;background:repeating-linear-gradient(180deg,transparent 0 1px,#A8A8A8 1px 2px);"></div>
<div class="t" style="left:29px;top:316px;font-size:11px;color:#0000FF;text-decoration:underline;transform:scaleY(1.12);transform-origin:0 80%;">105</div>
<div class="t" style="left:81px;top:316px;font-size:11px;color:#000;transform:scaleY(1.12);transform-origin:0 80%;">SSS</div>
<div class="t" style="left:382px;top:316px;font-size:11px;color:#000;transform:scaleY(1.12);transform-origin:0 80%;">pz</div>
<div class="t" style="right:189px;top:316px;font-size:11px;color:#000;transform:scaleY(1.12);transform-origin:0 80%;">0,00</div>
<div class="t" style="right:82px;top:316px;font-size:11px;color:#000;transform:scaleY(1.12);transform-origin:0 80%;">0,00</div>
<div class="a" style="left:6px;top:331px;width:18px;height:16px;background:linear-gradient(#F8F8F8,#F0F0F0 80%,#E0E0E0);"></div>
<div class="a" style="left:6px;top:331px;width:1px;height:16px;background:#FFFFFF;"></div>
<div class="a" style="left:22px;top:331px;width:2px;height:16px;background:linear-gradient(90deg,#E6E6E6,#D8D8D8);"></div>
<div class="a" style="left:6px;top:347px;width:18px;height:1px;background:#8FAFAA;"></div>
<div class="a" style="left:24px;top:330px;width:667px;height:17px;background:#FFFFFF;"></div>
<div class="a" style="left:24px;top:330px;width:667px;height:1px;background:repeating-linear-gradient(90deg,transparent 0 1px,#A8A8A8 1px 2px);"></div>
<div class="a" style="left:24px;top:330px;width:1px;height:17px;background:repeating-linear-gradient(180deg,#A8A8A8 0 1px,transparent 1px 2px);"></div>
<div class="a" style="left:76px;top:330px;width:1px;height:17px;background:repeating-linear-gradient(180deg,#A8A8A8 0 1px,transparent 1px 2px);"></div>
<div class="a" style="left:174px;top:330px;width:1px;height:17px;background:repeating-linear-gradient(180deg,#A8A8A8 0 1px,transparent 1px 2px);"></div>
<div class="a" style="left:272px;top:330px;width:1px;height:17px;background:repeating-linear-gradient(180deg,#A8A8A8 0 1px,transparent 1px 2px);"></div>
<div class="a" style="left:377px;top:330px;width:1px;height:17px;background:repeating-linear-gradient(180deg,#A8A8A8 0 1px,transparent 1px 2px);"></div>
<div class="a" style="left:475px;top:330px;width:1px;height:17px;background:repeating-linear-gradient(180deg,#A8A8A8 0 1px,transparent 1px 2px);"></div>
<div class="a" style="left:583px;top:330px;width:1px;height:17px;background:repeating-linear-gradient(180deg,#A8A8A8 0 1px,transparent 1px 2px);"></div>
<div class="a" style="left:690px;top:330px;width:1px;height:17px;background:repeating-linear-gradient(180deg,#A8A8A8 0 1px,transparent 1px 2px);"></div>
<div class="t" style="left:29px;top:333px;font-size:11px;color:#0000FF;text-decoration:underline;transform:scaleY(1.12);transform-origin:0 80%;">107</div>
<div class="t" style="left:81px;top:333px;font-size:11px;color:#000;transform:scaleY(1.12);transform-origin:0 80%;">ARTICOLO PR<span style="letter-spacing:-1.1px">...</span></div>
<div class="t" style="left:382px;top:333px;font-size:11px;color:#000;transform:scaleY(1.12);transform-origin:0 80%;">pz</div>
<div class="t" style="right:189px;top:333px;font-size:11px;color:#000;transform:scaleY(1.12);transform-origin:0 80%;">0,00</div>
<div class="t" style="right:82px;top:333px;font-size:11px;color:#000;transform:scaleY(1.12);transform-origin:0 80%;">0,00</div>
<div class="a" style="left:6px;top:348px;width:18px;height:16px;background:linear-gradient(#F8F8F8,#F0F0F0 80%,#E0E0E0);"></div>
<div class="a" style="left:6px;top:348px;width:1px;height:16px;background:#FFFFFF;"></div>
<div class="a" style="left:22px;top:348px;width:2px;height:16px;background:linear-gradient(90deg,#E6E6E6,#D8D8D8);"></div>
<div class="a" style="left:6px;top:364px;width:18px;height:1px;background:#8FAFAA;"></div>
<div class="a" style="left:24px;top:347px;width:667px;height:17px;background:#C0FFFF;"></div>
<div class="a" style="left:24px;top:347px;width:667px;height:1px;background:repeating-linear-gradient(90deg,transparent 0 1px,#A8A8A8 1px 2px);"></div>
<div class="a" style="left:24px;top:347px;width:1px;height:17px;background:repeating-linear-gradient(180deg,transparent 0 1px,#A8A8A8 1px 2px);"></div>
<div class="a" style="left:76px;top:347px;width:1px;height:17px;background:repeating-linear-gradient(180deg,transparent 0 1px,#A8A8A8 1px 2px);"></div>
<div class="a" style="left:174px;top:347px;width:1px;height:17px;background:repeating-linear-gradient(180deg,transparent 0 1px,#A8A8A8 1px 2px);"></div>
<div class="a" style="left:272px;top:347px;width:1px;height:17px;background:repeating-linear-gradient(180deg,transparent 0 1px,#A8A8A8 1px 2px);"></div>
<div class="a" style="left:377px;top:347px;width:1px;height:17px;background:repeating-linear-gradient(180deg,transparent 0 1px,#A8A8A8 1px 2px);"></div>
<div class="a" style="left:475px;top:347px;width:1px;height:17px;background:repeating-linear-gradient(180deg,transparent 0 1px,#A8A8A8 1px 2px);"></div>
<div class="a" style="left:583px;top:347px;width:1px;height:17px;background:repeating-linear-gradient(180deg,transparent 0 1px,#A8A8A8 1px 2px);"></div>
<div class="a" style="left:690px;top:347px;width:1px;height:17px;background:repeating-linear-gradient(180deg,transparent 0 1px,#A8A8A8 1px 2px);"></div>
<div class="t" style="left:29px;top:350px;font-size:11px;color:#0000FF;text-decoration:underline;transform:scaleY(1.12);transform-origin:0 80%;">108</div>
<div class="t" style="left:81px;top:350px;font-size:11px;color:#000;transform:scaleY(1.12);transform-origin:0 80%;">ARTICOLO PR<span style="letter-spacing:-1.1px">...</span></div>
<div class="t" style="left:382px;top:350px;font-size:11px;color:#000;transform:scaleY(1.12);transform-origin:0 80%;">pz</div>
<div class="t" style="right:189px;top:350px;font-size:11px;color:#000;transform:scaleY(1.12);transform-origin:0 80%;">0,00</div>
<div class="t" style="right:82px;top:350px;font-size:11px;color:#000;transform:scaleY(1.12);transform-origin:0 80%;">0,00</div>
<div class="a" style="left:6px;top:365px;width:18px;height:16px;background:linear-gradient(#F8F8F8,#F0F0F0 80%,#E0E0E0);"></div>
<div class="a" style="left:6px;top:365px;width:1px;height:16px;background:#FFFFFF;"></div>
<div class="a" style="left:22px;top:365px;width:2px;height:16px;background:linear-gradient(90deg,#E6E6E6,#D8D8D8);"></div>
<div class="a" style="left:6px;top:381px;width:18px;height:1px;background:#8FAFAA;"></div>
<div class="a" style="left:24px;top:364px;width:667px;height:17px;background:#FFFFFF;"></div>
<div class="a" style="left:24px;top:364px;width:667px;height:1px;background:repeating-linear-gradient(90deg,transparent 0 1px,#A8A8A8 1px 2px);"></div>
<div class="a" style="left:24px;top:364px;width:1px;height:17px;background:repeating-linear-gradient(180deg,#A8A8A8 0 1px,transparent 1px 2px);"></div>
<div class="a" style="left:76px;top:364px;width:1px;height:17px;background:repeating-linear-gradient(180deg,#A8A8A8 0 1px,transparent 1px 2px);"></div>
<div class="a" style="left:174px;top:364px;width:1px;height:17px;background:repeating-linear-gradient(180deg,#A8A8A8 0 1px,transparent 1px 2px);"></div>
<div class="a" style="left:272px;top:364px;width:1px;height:17px;background:repeating-linear-gradient(180deg,#A8A8A8 0 1px,transparent 1px 2px);"></div>
<div class="a" style="left:377px;top:364px;width:1px;height:17px;background:repeating-linear-gradient(180deg,#A8A8A8 0 1px,transparent 1px 2px);"></div>
<div class="a" style="left:475px;top:364px;width:1px;height:17px;background:repeating-linear-gradient(180deg,#A8A8A8 0 1px,transparent 1px 2px);"></div>
<div class="a" style="left:583px;top:364px;width:1px;height:17px;background:repeating-linear-gradient(180deg,#A8A8A8 0 1px,transparent 1px 2px);"></div>
<div class="a" style="left:690px;top:364px;width:1px;height:17px;background:repeating-linear-gradient(180deg,#A8A8A8 0 1px,transparent 1px 2px);"></div>
<div class="t" style="left:29px;top:367px;font-size:11px;color:#0000FF;text-decoration:underline;transform:scaleY(1.12);transform-origin:0 80%;">2000</div>
<div class="t" style="left:81px;top:367px;font-size:11px;color:#000;transform:scaleY(1.12);transform-origin:0 80%;">SACCO DI FARI<span style="letter-spacing:-1.1px">...</span></div>
<div class="t" style="left:382px;top:367px;font-size:11px;color:#000;transform:scaleY(1.12);transform-origin:0 80%;">sacchi 1 Kg</div>
<div class="t" style="right:189px;top:367px;font-size:11px;color:#000;transform:scaleY(1.12);transform-origin:0 80%;">1,40</div>
<div class="t" style="right:82px;top:367px;font-size:11px;color:#000;transform:scaleY(1.12);transform-origin:0 80%;">1,00</div>
<div class="a" style="left:6px;top:382px;width:18px;height:16px;background:linear-gradient(#F8F8F8,#F0F0F0 80%,#E0E0E0);"></div>
<div class="a" style="left:6px;top:382px;width:1px;height:16px;background:#FFFFFF;"></div>
<div class="a" style="left:22px;top:382px;width:2px;height:16px;background:linear-gradient(90deg,#E6E6E6,#D8D8D8);"></div>
<div class="a" style="left:6px;top:398px;width:18px;height:1px;background:#8FAFAA;"></div>
<div class="a" style="left:24px;top:381px;width:667px;height:17px;background:#C0FFFF;"></div>
<div class="a" style="left:24px;top:381px;width:667px;height:1px;background:repeating-linear-gradient(90deg,transparent 0 1px,#A8A8A8 1px 2px);"></div>
<div class="a" style="left:24px;top:381px;width:1px;height:17px;background:repeating-linear-gradient(180deg,transparent 0 1px,#A8A8A8 1px 2px);"></div>
<div class="a" style="left:76px;top:381px;width:1px;height:17px;background:repeating-linear-gradient(180deg,transparent 0 1px,#A8A8A8 1px 2px);"></div>
<div class="a" style="left:174px;top:381px;width:1px;height:17px;background:repeating-linear-gradient(180deg,transparent 0 1px,#A8A8A8 1px 2px);"></div>
<div class="a" style="left:272px;top:381px;width:1px;height:17px;background:repeating-linear-gradient(180deg,transparent 0 1px,#A8A8A8 1px 2px);"></div>
<div class="a" style="left:377px;top:381px;width:1px;height:17px;background:repeating-linear-gradient(180deg,transparent 0 1px,#A8A8A8 1px 2px);"></div>
<div class="a" style="left:475px;top:381px;width:1px;height:17px;background:repeating-linear-gradient(180deg,transparent 0 1px,#A8A8A8 1px 2px);"></div>
<div class="a" style="left:583px;top:381px;width:1px;height:17px;background:repeating-linear-gradient(180deg,transparent 0 1px,#A8A8A8 1px 2px);"></div>
<div class="a" style="left:690px;top:381px;width:1px;height:17px;background:repeating-linear-gradient(180deg,transparent 0 1px,#A8A8A8 1px 2px);"></div>
<div class="t" style="left:29px;top:384px;font-size:11px;color:#0000FF;text-decoration:underline;transform:scaleY(1.12);transform-origin:0 80%;">3000</div>
<div class="t" style="left:81px;top:384px;font-size:11px;color:#000;transform:scaleY(1.12);transform-origin:0 80%;">ARTICOLO DA<span style="letter-spacing:-1.1px">...</span></div>
<div class="t" style="left:382px;top:384px;font-size:11px;color:#000;transform:scaleY(1.12);transform-origin:0 80%;">pz</div>
<div class="t" style="right:189px;top:384px;font-size:11px;color:#000;transform:scaleY(1.12);transform-origin:0 80%;">13,86</div>
<div class="t" style="right:82px;top:384px;font-size:11px;color:#000;transform:scaleY(1.12);transform-origin:0 80%;">9,90</div>
<div class="a" style="left:6px;top:399px;width:18px;height:16px;background:linear-gradient(#F8F8F8,#F0F0F0 80%,#E0E0E0);"></div>
<div class="a" style="left:6px;top:399px;width:1px;height:16px;background:#FFFFFF;"></div>
<div class="a" style="left:22px;top:399px;width:2px;height:16px;background:linear-gradient(90deg,#E6E6E6,#D8D8D8);"></div>
<div class="a" style="left:6px;top:415px;width:18px;height:1px;background:#8FAFAA;"></div>
<div class="a" style="left:24px;top:398px;width:667px;height:17px;background:#FFFFFF;"></div>
<div class="a" style="left:24px;top:398px;width:667px;height:1px;background:repeating-linear-gradient(90deg,transparent 0 1px,#A8A8A8 1px 2px);"></div>
<div class="a" style="left:24px;top:398px;width:1px;height:17px;background:repeating-linear-gradient(180deg,#A8A8A8 0 1px,transparent 1px 2px);"></div>
<div class="a" style="left:76px;top:398px;width:1px;height:17px;background:repeating-linear-gradient(180deg,#A8A8A8 0 1px,transparent 1px 2px);"></div>
<div class="a" style="left:174px;top:398px;width:1px;height:17px;background:repeating-linear-gradient(180deg,#A8A8A8 0 1px,transparent 1px 2px);"></div>
<div class="a" style="left:272px;top:398px;width:1px;height:17px;background:repeating-linear-gradient(180deg,#A8A8A8 0 1px,transparent 1px 2px);"></div>
<div class="a" style="left:377px;top:398px;width:1px;height:17px;background:repeating-linear-gradient(180deg,#A8A8A8 0 1px,transparent 1px 2px);"></div>
<div class="a" style="left:475px;top:398px;width:1px;height:17px;background:repeating-linear-gradient(180deg,#A8A8A8 0 1px,transparent 1px 2px);"></div>
<div class="a" style="left:583px;top:398px;width:1px;height:17px;background:repeating-linear-gradient(180deg,#A8A8A8 0 1px,transparent 1px 2px);"></div>
<div class="a" style="left:690px;top:398px;width:1px;height:17px;background:repeating-linear-gradient(180deg,#A8A8A8 0 1px,transparent 1px 2px);"></div>
<div class="t" style="left:29px;top:401px;font-size:11px;color:#0000FF;text-decoration:underline;transform:scaleY(1.12);transform-origin:0 80%;">3001</div>
<div class="t" style="left:81px;top:401px;font-size:11px;color:#000;transform:scaleY(1.12);transform-origin:0 80%;">ARTICOLO DA<span style="letter-spacing:-1.1px">...</span></div>
<div class="t" style="left:382px;top:401px;font-size:11px;color:#000;transform:scaleY(1.12);transform-origin:0 80%;">pz</div>
<div class="t" style="right:189px;top:401px;font-size:11px;color:#000;transform:scaleY(1.12);transform-origin:0 80%;">13,86</div>
<div class="t" style="right:82px;top:401px;font-size:11px;color:#000;transform:scaleY(1.12);transform-origin:0 80%;">9,90</div>
<div class="a" style="left:6px;top:416px;width:18px;height:16px;background:linear-gradient(#F8F8F8,#F0F0F0 80%,#E0E0E0);"></div>
<div class="a" style="left:6px;top:416px;width:1px;height:16px;background:#FFFFFF;"></div>
<div class="a" style="left:22px;top:416px;width:2px;height:16px;background:linear-gradient(90deg,#E6E6E6,#D8D8D8);"></div>
<div class="a" style="left:6px;top:432px;width:18px;height:1px;background:#8FAFAA;"></div>
<div class="a" style="left:24px;top:415px;width:667px;height:17px;background:#C0FFFF;"></div>
<div class="a" style="left:24px;top:415px;width:667px;height:1px;background:repeating-linear-gradient(90deg,transparent 0 1px,#A8A8A8 1px 2px);"></div>
<div class="a" style="left:24px;top:415px;width:1px;height:17px;background:repeating-linear-gradient(180deg,transparent 0 1px,#A8A8A8 1px 2px);"></div>
<div class="a" style="left:76px;top:415px;width:1px;height:17px;background:repeating-linear-gradient(180deg,transparent 0 1px,#A8A8A8 1px 2px);"></div>
<div class="a" style="left:174px;top:415px;width:1px;height:17px;background:repeating-linear-gradient(180deg,transparent 0 1px,#A8A8A8 1px 2px);"></div>
<div class="a" style="left:272px;top:415px;width:1px;height:17px;background:repeating-linear-gradient(180deg,transparent 0 1px,#A8A8A8 1px 2px);"></div>
<div class="a" style="left:377px;top:415px;width:1px;height:17px;background:repeating-linear-gradient(180deg,transparent 0 1px,#A8A8A8 1px 2px);"></div>
<div class="a" style="left:475px;top:415px;width:1px;height:17px;background:repeating-linear-gradient(180deg,transparent 0 1px,#A8A8A8 1px 2px);"></div>
<div class="a" style="left:583px;top:415px;width:1px;height:17px;background:repeating-linear-gradient(180deg,transparent 0 1px,#A8A8A8 1px 2px);"></div>
<div class="a" style="left:690px;top:415px;width:1px;height:17px;background:repeating-linear-gradient(180deg,transparent 0 1px,#A8A8A8 1px 2px);"></div>
<div class="t" style="left:29px;top:418px;font-size:11px;color:#0000FF;text-decoration:underline;transform:scaleY(1.12);transform-origin:0 80%;">55</div>
<div class="t" style="left:81px;top:418px;font-size:11px;color:#000;transform:scaleY(1.12);transform-origin:0 80%;">SPAGHETTI</div>
<div class="t" style="left:179px;top:418px;font-size:11px;color:#000;transform:scaleY(1.12);transform-origin:0 80%;">210000001925</div>
<div class="t" style="left:277px;top:418px;font-size:11px;color:#000;transform:scaleY(1.12);transform-origin:0 80%;">A1230</div>
<div class="t" style="left:382px;top:418px;font-size:11px;color:#000;transform:scaleY(1.12);transform-origin:0 80%;">pz</div>
<div class="t" style="right:189px;top:418px;font-size:11px;color:#000;transform:scaleY(1.12);transform-origin:0 80%;">1,75</div>
<div class="t" style="right:82px;top:418px;font-size:11px;color:#000;transform:scaleY(1.12);transform-origin:0 80%;">1,25</div>
<div class="a" style="left:6px;top:433px;width:18px;height:16px;background:linear-gradient(#F8F8F8,#F0F0F0 80%,#E0E0E0);"></div>
<div class="a" style="left:6px;top:433px;width:1px;height:16px;background:#FFFFFF;"></div>
<div class="a" style="left:22px;top:433px;width:2px;height:16px;background:linear-gradient(90deg,#E6E6E6,#D8D8D8);"></div>
<div class="a" style="left:6px;top:449px;width:18px;height:1px;background:#8FAFAA;"></div>
<div class="a" style="left:24px;top:432px;width:667px;height:17px;background:#FFFFFF;"></div>
<div class="a" style="left:24px;top:432px;width:667px;height:1px;background:repeating-linear-gradient(90deg,transparent 0 1px,#A8A8A8 1px 2px);"></div>
<div class="a" style="left:24px;top:432px;width:1px;height:17px;background:repeating-linear-gradient(180deg,#A8A8A8 0 1px,transparent 1px 2px);"></div>
<div class="a" style="left:76px;top:432px;width:1px;height:17px;background:repeating-linear-gradient(180deg,#A8A8A8 0 1px,transparent 1px 2px);"></div>
<div class="a" style="left:174px;top:432px;width:1px;height:17px;background:repeating-linear-gradient(180deg,#A8A8A8 0 1px,transparent 1px 2px);"></div>
<div class="a" style="left:272px;top:432px;width:1px;height:17px;background:repeating-linear-gradient(180deg,#A8A8A8 0 1px,transparent 1px 2px);"></div>
<div class="a" style="left:377px;top:432px;width:1px;height:17px;background:repeating-linear-gradient(180deg,#A8A8A8 0 1px,transparent 1px 2px);"></div>
<div class="a" style="left:475px;top:432px;width:1px;height:17px;background:repeating-linear-gradient(180deg,#A8A8A8 0 1px,transparent 1px 2px);"></div>
<div class="a" style="left:583px;top:432px;width:1px;height:17px;background:repeating-linear-gradient(180deg,#A8A8A8 0 1px,transparent 1px 2px);"></div>
<div class="a" style="left:690px;top:432px;width:1px;height:17px;background:repeating-linear-gradient(180deg,#A8A8A8 0 1px,transparent 1px 2px);"></div>
<div class="t" style="left:29px;top:435px;font-size:11px;color:#0000FF;text-decoration:underline;transform:scaleY(1.12);transform-origin:0 80%;">56</div>
<div class="t" style="left:81px;top:435px;font-size:11px;color:#000;transform:scaleY(1.12);transform-origin:0 80%;">ORECCHIETTE</div>
<div class="t" style="left:179px;top:435px;font-size:11px;color:#000;transform:scaleY(1.12);transform-origin:0 80%;">210000001926</div>
<div class="t" style="left:277px;top:435px;font-size:11px;color:#000;transform:scaleY(1.12);transform-origin:0 80%;">A1234</div>
<div class="t" style="left:382px;top:435px;font-size:11px;color:#000;transform:scaleY(1.12);transform-origin:0 80%;">pz</div>
<div class="t" style="right:189px;top:435px;font-size:11px;color:#000;transform:scaleY(1.12);transform-origin:0 80%;">2,10</div>
<div class="t" style="right:82px;top:435px;font-size:11px;color:#000;transform:scaleY(1.12);transform-origin:0 80%;">1,50</div>
<div class="a" style="left:6px;top:450px;width:18px;height:16px;background:linear-gradient(#F8F8F8,#F0F0F0 80%,#E0E0E0);"></div>
<div class="a" style="left:6px;top:450px;width:1px;height:16px;background:#FFFFFF;"></div>
<div class="a" style="left:22px;top:450px;width:2px;height:16px;background:linear-gradient(90deg,#E6E6E6,#D8D8D8);"></div>
<div class="a" style="left:6px;top:466px;width:18px;height:1px;background:#8FAFAA;"></div>
<div class="a" style="left:24px;top:449px;width:667px;height:17px;background:#C0FFFF;"></div>
<div class="a" style="left:24px;top:449px;width:667px;height:1px;background:repeating-linear-gradient(90deg,transparent 0 1px,#A8A8A8 1px 2px);"></div>
<div class="a" style="left:24px;top:449px;width:1px;height:17px;background:repeating-linear-gradient(180deg,transparent 0 1px,#A8A8A8 1px 2px);"></div>
<div class="a" style="left:76px;top:449px;width:1px;height:17px;background:repeating-linear-gradient(180deg,transparent 0 1px,#A8A8A8 1px 2px);"></div>
<div class="a" style="left:174px;top:449px;width:1px;height:17px;background:repeating-linear-gradient(180deg,transparent 0 1px,#A8A8A8 1px 2px);"></div>
<div class="a" style="left:272px;top:449px;width:1px;height:17px;background:repeating-linear-gradient(180deg,transparent 0 1px,#A8A8A8 1px 2px);"></div>
<div class="a" style="left:377px;top:449px;width:1px;height:17px;background:repeating-linear-gradient(180deg,transparent 0 1px,#A8A8A8 1px 2px);"></div>
<div class="a" style="left:475px;top:449px;width:1px;height:17px;background:repeating-linear-gradient(180deg,transparent 0 1px,#A8A8A8 1px 2px);"></div>
<div class="a" style="left:583px;top:449px;width:1px;height:17px;background:repeating-linear-gradient(180deg,transparent 0 1px,#A8A8A8 1px 2px);"></div>
<div class="a" style="left:690px;top:449px;width:1px;height:17px;background:repeating-linear-gradient(180deg,transparent 0 1px,#A8A8A8 1px 2px);"></div>
<div class="t" style="left:29px;top:452px;font-size:11px;color:#0000FF;text-decoration:underline;transform:scaleY(1.12);transform-origin:0 80%;">57</div>
<div class="t" style="left:81px;top:452px;font-size:11px;color:#000;transform:scaleY(1.12);transform-origin:0 80%;">FUSILLI</div>
<div class="t" style="left:179px;top:452px;font-size:11px;color:#000;transform:scaleY(1.12);transform-origin:0 80%;">210000001927</div>
<div class="t" style="left:277px;top:452px;font-size:11px;color:#000;transform:scaleY(1.12);transform-origin:0 80%;">A1233</div>
<div class="t" style="left:382px;top:452px;font-size:11px;color:#000;transform:scaleY(1.12);transform-origin:0 80%;">pz</div>
<div class="t" style="right:189px;top:452px;font-size:11px;color:#000;transform:scaleY(1.12);transform-origin:0 80%;">0,98</div>
<div class="t" style="right:82px;top:452px;font-size:11px;color:#000;transform:scaleY(1.12);transform-origin:0 80%;">0,70</div>
<div class="a" style="left:6px;top:467px;width:18px;height:16px;background:linear-gradient(#F8F8F8,#F0F0F0 80%,#E0E0E0);"></div>
<div class="a" style="left:6px;top:467px;width:1px;height:16px;background:#FFFFFF;"></div>
<div class="a" style="left:22px;top:467px;width:2px;height:16px;background:linear-gradient(90deg,#E6E6E6,#D8D8D8);"></div>
<div class="a" style="left:6px;top:483px;width:18px;height:1px;background:#8FAFAA;"></div>
<div class="a" style="left:24px;top:466px;width:667px;height:17px;background:#FFFFFF;"></div>
<div class="a" style="left:24px;top:466px;width:667px;height:1px;background:repeating-linear-gradient(90deg,transparent 0 1px,#A8A8A8 1px 2px);"></div>
<div class="a" style="left:24px;top:466px;width:1px;height:17px;background:repeating-linear-gradient(180deg,#A8A8A8 0 1px,transparent 1px 2px);"></div>
<div class="a" style="left:76px;top:466px;width:1px;height:17px;background:repeating-linear-gradient(180deg,#A8A8A8 0 1px,transparent 1px 2px);"></div>
<div class="a" style="left:174px;top:466px;width:1px;height:17px;background:repeating-linear-gradient(180deg,#A8A8A8 0 1px,transparent 1px 2px);"></div>
<div class="a" style="left:272px;top:466px;width:1px;height:17px;background:repeating-linear-gradient(180deg,#A8A8A8 0 1px,transparent 1px 2px);"></div>
<div class="a" style="left:377px;top:466px;width:1px;height:17px;background:repeating-linear-gradient(180deg,#A8A8A8 0 1px,transparent 1px 2px);"></div>
<div class="a" style="left:475px;top:466px;width:1px;height:17px;background:repeating-linear-gradient(180deg,#A8A8A8 0 1px,transparent 1px 2px);"></div>
<div class="a" style="left:583px;top:466px;width:1px;height:17px;background:repeating-linear-gradient(180deg,#A8A8A8 0 1px,transparent 1px 2px);"></div>
<div class="a" style="left:690px;top:466px;width:1px;height:17px;background:repeating-linear-gradient(180deg,#A8A8A8 0 1px,transparent 1px 2px);"></div>
<div class="t" style="left:29px;top:469px;font-size:11px;color:#0000FF;text-decoration:underline;transform:scaleY(1.12);transform-origin:0 80%;">58</div>
<div class="t" style="left:81px;top:469px;font-size:11px;color:#000;transform:scaleY(1.12);transform-origin:0 80%;">LASAGNE</div>
<div class="t" style="left:179px;top:469px;font-size:11px;color:#000;transform:scaleY(1.12);transform-origin:0 80%;">210000001928</div>
<div class="t" style="left:277px;top:469px;font-size:11px;color:#000;transform:scaleY(1.12);transform-origin:0 80%;">A1232</div>
<div class="t" style="left:382px;top:469px;font-size:11px;color:#000;transform:scaleY(1.12);transform-origin:0 80%;">pz</div>
<div class="t" style="right:189px;top:469px;font-size:11px;color:#000;transform:scaleY(1.12);transform-origin:0 80%;">2,65</div>
<div class="t" style="right:82px;top:469px;font-size:11px;color:#000;transform:scaleY(1.12);transform-origin:0 80%;">1,89</div>
<div class="a" style="left:746px;top:171px;width:16px;height:307px;background:#F0F0F0;"></div>
<div class="a" style="left:746px;top:188px;width:15px;height:290px;background:#CDCDCD;"></div>
<svg style="left:749px;top:176px" width="9" height="8" viewBox="0 0 9 8"><path d="M1,6.5 L4.5,2.5 L8,6.5" fill="none" stroke="#606060" stroke-width="2"/></svg>
<div class="a" style="left:207px;top:223px;width:131px;height:70px;background:#FBFBFB;border:1px solid #989898;box-shadow:4px 4px 3px -1px rgba(0,0,0,0.45)"></div>
<div class="a" style="left:208px;top:224px;width:24px;height:68px;background:linear-gradient(90deg,#F3F3F3,#EFEFEF);"></div>
<div class="t" style="left:243px;top:231px;font-size:12px;color:#000;letter-spacing:0.2px">Aggiorna!</div>
<div class="t" style="left:243px;top:253px;font-size:12px;color:#000;font-weight:bold">Apri<span style="letter-spacing:-0.8px">...</span></div>
<div class="t" style="left:243px;top:275px;font-size:12px;color:#000;">Esistenz<span style="letter-spacing:-0.3px">a</span><span style="letter-spacing:-1.2px">...</span></div>
<svg style="left:211px;top:227px" width="18" height="18" viewBox="0 0 18 18"><g>
<path d="M4.3,5.9 A5.3,5.3 0 0 1 13.2,6.2" fill="none" stroke="#2A7FE8" stroke-width="2.4"/>
<path d="M5.6,6.2 A4.4,4.4 0 0 1 11.8,6.0" fill="none" stroke="#9ED0FF" stroke-width="0.6"/>
<path d="M10.2,9.3 L15.4,9.3 L15.4,4.3 Z" fill="#A8D8FF" stroke="#2A7FE8" stroke-width="1.1" stroke-linejoin="round"/>
</g><g transform="rotate(180 8.85 8.65)">
<path d="M4.3,5.9 A5.3,5.3 0 0 1 13.2,6.2" fill="none" stroke="#2A7FE8" stroke-width="2.4"/>
<path d="M5.6,6.2 A4.4,4.4 0 0 1 11.8,6.0" fill="none" stroke="#9ED0FF" stroke-width="0.6"/>
<path d="M10.2,9.3 L15.4,9.3 L15.4,4.3 Z" fill="#A8D8FF" stroke="#2A7FE8" stroke-width="1.1" stroke-linejoin="round"/>
</g></svg>
<svg style="left:211px;top:250px" width="18" height="18" viewBox="0 0 18 18">
<path d="M2.2,5.2 L4.4,3.6 L15.6,2.2 L15.6,10.6 L4,13.6 L2.2,12.6 Z" fill="#F6A030" stroke="#707070" stroke-width="0.8"/>
<path d="M2.6,5.4 L4.4,5.2 L4.4,13.2 L2.6,12.4 Z" fill="#FFF4E8"/>
<path d="M4.8,4.2 L15.2,2.8 L15.2,5 L4.8,6.6 Z" fill="#FF7818"/>
<path d="M4.8,7 L15.2,5.6 L15.2,9 L4.8,10.6 Z" fill="#B4BCC4"/>
<path d="M4.8,8 L15.2,6.6 M4.8,9.6 L15.2,8" stroke="#707880" stroke-width="0.6"/>
<path d="M4.8,10.8 L15.2,9.2 L15.2,10.4 L4.8,13 Z" fill="#FFB040"/>
</svg>
<svg style="left:210px;top:270px" width="18" height="18" viewBox="0 0 18 18">
<path d="M3,4.6 Q3.5,3.4 6,3.2 L11.5,2.8 Q15.5,3.2 16.4,5 L16.2,13.6 Q15.5,14.8 12.5,16 L8,16.8 Q4,15.5 3,13.4 Z" fill="#DCA814" stroke="#A88000" stroke-width="0.5"/>
<path d="M6,6.2 Q9,5.2 12.5,5.6 L12.7,16 L8,16.6 Q6.5,16 6,15 Z" fill="#F2C636"/>
<path d="M7,7 Q9,6.4 11.5,6.6 L11.5,9.5 L7,10 Z" fill="#F8DA60"/>
<path d="M5.6,4.4 L5.6,14.6" stroke="#3A3018" stroke-width="0.9"/>
<path d="M12.6,5.4 L12.6,16.2" stroke="#3A3018" stroke-width="0.9"/>
<path d="M3,9 L7.8,11.3 L12.6,10.4 L16.3,9.2" fill="none" stroke="#3A3018" stroke-width="0.9"/>
<path d="M7.2,4.4 L10.8,4.4" stroke="#3A3018" stroke-width="1.2"/>
</svg></body></html>
